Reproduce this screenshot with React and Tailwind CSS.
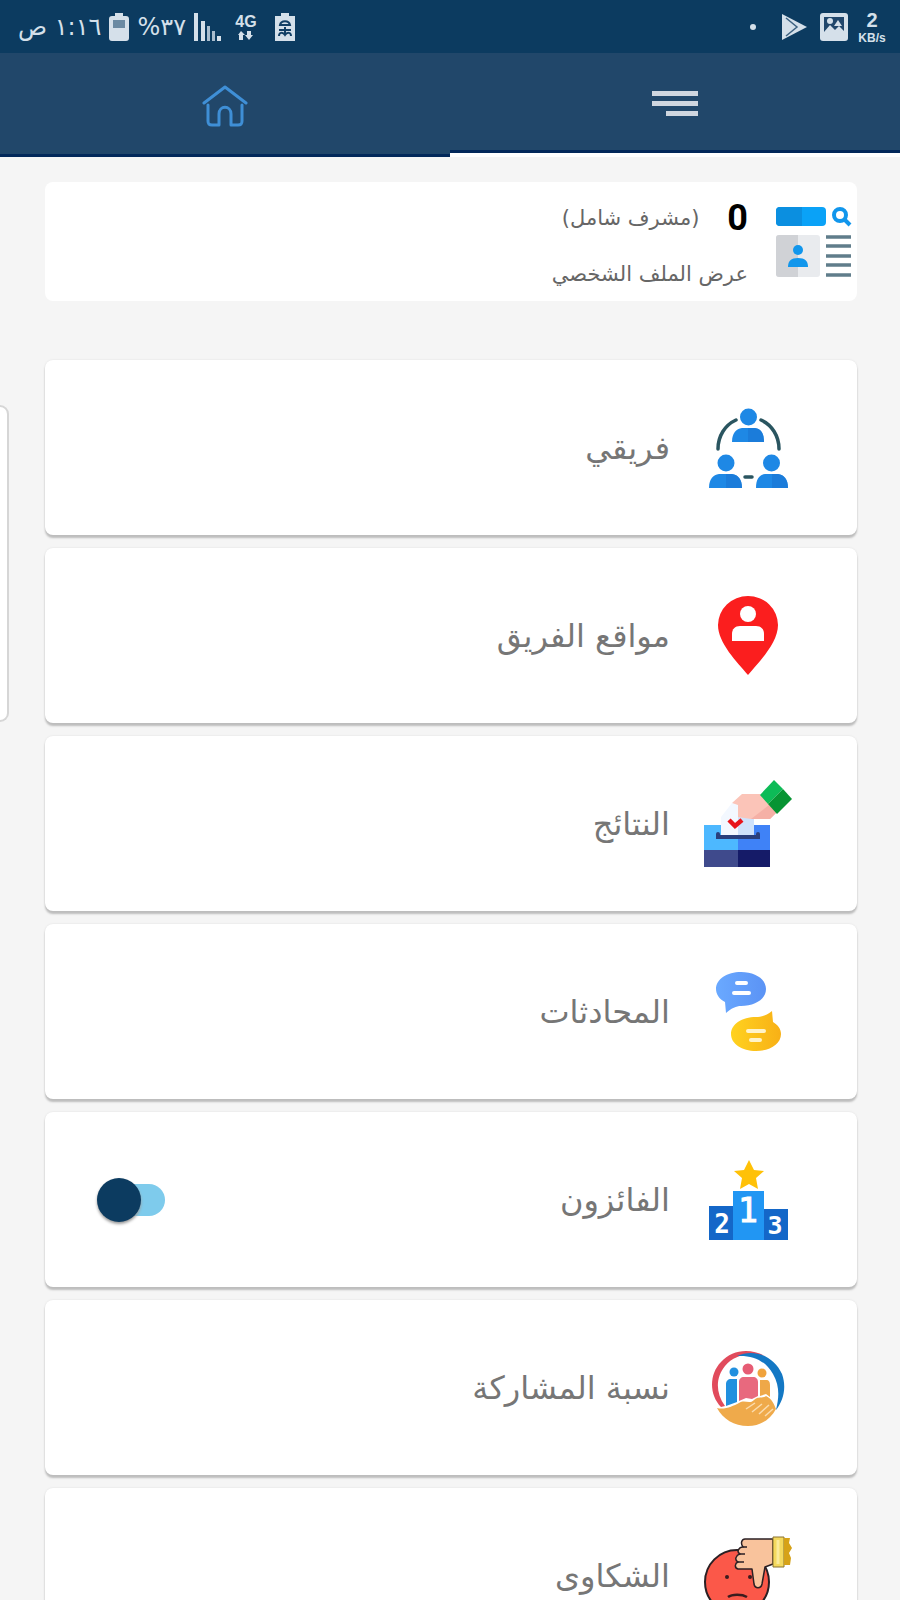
import React from "react";

function TeamIcon() {
  return (
    <svg viewBox="0 0 90 90" className="size-[90px] shrink-0" aria-hidden="true">
      <g fill="none" stroke="#2a5560" strokeWidth="3.5" strokeLinecap="round">
        <path d="M15 46C15 33 22 22 33 17M58 17C69 22 76 33 76 46M42 74H49" />
      </g>
      <g fill="#1e88e5">
        <circle cx="45.500" cy="14" r="8.500" />
        <path d="M29 39C29 30 33 26 39 25H52C58 26 61 30 61 39Z" />
        <circle cx="23" cy="60" r="8.500" />
        <path d="M6 85C6 76 10 72 16 71H29C35 72 39 76 39 85Z" />
        <circle cx="68.500" cy="60" r="8.500" />
        <path d="M53 85C53 76 56 72 62 71H75C81 72 85 76 85 85Z" />
      </g>
      <g fill="#1a78d6" opacity=".7">
        <path d="M45 25H52C58 26 61 30 61 39H45Z" />
        <path d="M23 71H29C35 72 39 76 39 85H23Z" />
        <path d="M69 71H75C81 72 85 76 85 85H69Z" />
      </g>
    </svg>
  );
}

function PinIcon() {
  return (
    <svg viewBox="0 0 90 90" className="size-[90px] shrink-0" aria-hidden="true">
      <path d="M45 84C34 71 15 52 15 34A30 29 0 0 1 75 34C75 52 56 71 45 84Z" fill="#fb1e1e" />
      <circle cx="45" cy="23" r="8" fill="#fff" />
      <path d="M29 50V43C29 38 32 35 37 35H53C58 35 61 38 61 43V50Z" fill="#fff" />
    </svg>
  );
}

function BallotIcon() {
  return (
    <svg viewBox="0 0 90 90" className="size-[90px] shrink-0" aria-hidden="true">
      <path d="M1 46H35V71H1Z" fill="#4db8ff" />
      <path d="M35 46H67V71H35Z" fill="#3f82f7" />
      <path d="M1 71H35V88H1Z" fill="#3f4a8c" />
      <path d="M35 71H67V88H35Z" fill="#151b68" />
      <path d="M18 57V38L29 24H35V57Z" fill="#f3f8ff" />
      <path d="M35 26L51 40V57H35Z" fill="#cfe2fb" />
      <path d="M15 55V58H55V55" fill="none" stroke="#2a3f7c" strokeWidth="4" strokeLinecap="round" />
      <path d="M29 24L39 15H57L74 33L67 40H48L35 38V26Z" fill="#fbc4b8" />
      <path d="M48 40L66 26L74 33L67 40Z" fill="#f5b0a6" />
      <path d="M71 1L80 10L65 25L57 16Z" fill="#0dbb57" />
      <path d="M80 10L89 20L74 35L65 25Z" fill="#079433" />
      <path d="M26 41L32 47L39 41" fill="none" stroke="#e8151c" strokeWidth="4.500" />
    </svg>
  );
}

function ChatIcon() {
  return (
    <svg viewBox="0 0 90 90" className="size-[90px] shrink-0" aria-hidden="true">
      <defs>
        <linearGradient id="blueBubble" x1="0" x2="1">
          <stop offset="0" stopColor="#6aa9ff" />
          <stop offset="1" stopColor="#5b93f5" />
        </linearGradient>
        <linearGradient id="goldBubble" x1="0" x2="1">
          <stop offset="0" stopColor="#ffd21f" />
          <stop offset="1" stopColor="#f8b016" />
        </linearGradient>
      </defs>
      <path d="M23 46L22 35C16 32 13 27 13 22C13 12 24 5 38 5S63 12 63 22S52 39 38 39C33 39 29 41 23 46Z" fill="url(#blueBubble)" />
      <path d="M69 44L70 55C75 58 78 62 78 67C78 77 67 84 53 84S28 77 28 67S39 50 53 50C58 50 63 49 69 44Z" fill="url(#goldBubble)" />
      <g stroke="#fff" strokeWidth="4" strokeLinecap="round">
        <path d="M34 16H43M31 26H46" />
        <path d="M45 64H61M48 73H57" stroke="#fff3c9" />
      </g>
    </svg>
  );
}

function PodiumIcon() {
  return (
    <svg viewBox="0 0 90 90" className="size-[90px] shrink-0" aria-hidden="true">
      <path d="M46 5L51 15L61 16L53 23L55 34L46 29L37 34L39 23L31 16L41 15Z" fill="#ffc107" />
      <path d="M6 51H30V85H6Z" fill="#1467c8" />
      <path d="M61 54H85V85H61Z" fill="#1467c8" />
      <path d="M30 36H61V85H30Z" fill="#2196f3" />
      <g fill="#fff" fontFamily="'DejaVu Sans Mono', monospace" fontWeight="700" textAnchor="middle">
        <text x="19" y="78" fontSize="26">2</text>
        <text x="45" y="67" fontSize="33" fontWeight="400" stroke="#fff">1</text>
        <text x="72" y="79" fontSize="25">3</text>
      </g>
    </svg>
  );
}

function CommunityIcon() {
  return (
    <svg viewBox="0 0 90 90" className="size-[90px] shrink-0" aria-hidden="true">
      <path d="M18 64C6 52 6 31 18 19C29 6 48 5 62 13C46 9 31 12 22 23C13 34 12 49 22 63Z" fill="#e14b5c" />
      <path d="M34 13C51 5 71 13 79 31C84 45 80 58 73 67C76 55 77 43 70 31C62 17 49 12 34 13Z" fill="#1478c4" />
      <path d="M14 65C22 67 30 63 36 60C42 56 46 62 51 57C55 53 59 56 63 53C69 56 71 61 73 66C67 77 57 83 45 83C31 83 20 76 14 65Z" fill="#efaa4b" />
      <path d="M43 66L52 60M49 69L59 61M56 71L66 62M62 73L70 66" stroke="#fbdcae" strokeWidth="1.500" />
      <circle cx="31" cy="29" r="4.500" fill="#2290df" />
      <path d="M23 63V41C23 38 25 36 28 36H34V59Z" fill="#2290df" />
      <circle cx="45" cy="26" r="5.500" fill="#e65c74" />
      <path d="M36 58V39C36 36 38 34 41 34H50C53 34 55 36 55 39V53L49 56L43 55Z" fill="#e8697e" />
      <circle cx="59" cy="30" r="4.500" fill="#f0a33c" />
      <path d="M57 53V37H63C66 37 67 39 67 42V54L63 51Z" fill="#efa848" />
    </svg>
  );
}

function ComplaintIcon() {
  return (
    <svg viewBox="0 0 90 90" className="size-[90px] shrink-0" aria-hidden="true">
      <circle cx="34" cy="51" r="32" fill="#fb5849" stroke="#2b2024" strokeWidth="2" />
      <circle cx="24" cy="46" r="2" fill="#3b1c1e" />
      <circle cx="47" cy="46" r="2" fill="#3b1c1e" />
      <path d="M25 66C29 63 39 63 44 66" fill="none" stroke="#3b1c1e" strokeWidth="2.500" />
      <path d="M42 8H70V33L62 36L59 53C58 58 52 58 51 53L49 38H35C31 37 32 32 35 31C31 29 33 24 37 23C33 21 36 16 40 16C37 12 39 8 42 8Z" fill="#f9c39c" stroke="#2b2024" strokeWidth="1.500" strokeLinejoin="round" />
      <path d="M35 31H41M37 23H42M40 16H44" stroke="#2b2024" strokeWidth="1.500" />
      <path d="M70 6H81V36H70Z" fill="#f4d95e" stroke="#8a7330" strokeWidth="1" />
      <path d="M81 7H87L86 12L89 17L86 22L88 27L87 34H81Z" fill="#d6a218" />
      <path d="M75 9V33" stroke="#fbeb9a" strokeWidth="3" />
    </svg>
  );
}

function ProfileIcon() {
  return (
    <svg viewBox="0 0 77 72" className="h-[72px] w-[77px] shrink-0" aria-hidden="true">
      <rect x="0" y="1" width="50" height="19" rx="4" fill="#0aa2f7" />
      <path d="M4 1H26V20H4A4 4 0 0 1 0 16V5A4 4 0 0 1 4 1Z" fill="#0b8fe0" />
      <circle cx="64" cy="9" r="6" fill="none" stroke="#1196ec" strokeWidth="4" />
      <path d="M68 13L74 19" stroke="#1196ec" strokeWidth="4" />
      <rect x="0" y="29" width="44" height="42" rx="3" fill="#e9ebee" />
      <path d="M3 29H22V71H3A3 3 0 0 1 0 68V32A3 3 0 0 1 3 29Z" fill="#d0d2d6" />
      <circle cx="22" cy="44" r="5" fill="#1196ec" />
      <path d="M12 61C12 55 15 52 22 52S32 55 32 61Z" fill="#1196ec" />
      <path d="M50 31H75M50 40H75M50 50H75M50 59H75M50 69H75" stroke="#607d8b" strokeWidth="3.500" />
    </svg>
  );
}

const items = [
  { label: "فريقي", Icon: TeamIcon },
  { label: "مواقع الفريق", Icon: PinIcon },
  { label: "النتائج", Icon: BallotIcon },
  { label: "المحادثات", Icon: ChatIcon },
  { label: "الفائزون", Icon: PodiumIcon, toggle: true },
  { label: "نسبة المشاركة", Icon: CommunityIcon },
  { label: "الشكاوى", Icon: ComplaintIcon },
];

function StatusBar() {
  return (
    <div className="flex h-[53px] shrink-0 items-center justify-between bg-[#0c3b60] pr-3 pl-[18px] text-[#d5e0ea]">
      <div className="flex items-center gap-2">
        <div className="flex w-8 flex-col items-center font-['Liberation_Sans',sans-serif] font-bold">
          <span className="text-[20px] leading-[22px]">2</span>
          <span dir="ltr" className="text-[12px] leading-[14px]">KB/s</span>
        </div>
        <svg viewBox="0 0 28 28" className="size-7" aria-hidden="true">
          <rect width="28" height="28" rx="3" fill="#d5e0ea" />
          <path d="M4 4H24V18L19 13L15 17L10 12L4 19Z" fill="#21476c" />
          <circle cx="10" cy="8" r="3" fill="#d5e0ea" />
          <path d="M14 13L18 7L22 13Z" fill="#d5e0ea" />
        </svg>
        <svg viewBox="0 0 28 28" className="mr-1 size-7" aria-hidden="true">
          <path d="M2 1L27 14L2 27Z" fill="#d5e0ea" />
          <path d="M6 5L17 14L6 23" fill="none" stroke="#3d6180" strokeWidth="1.500" />
        </svg>
        <span className="mr-4 size-[6px] rounded-full bg-[#d5e0ea]" />
      </div>
      <div className="flex items-center gap-2">
        <svg viewBox="0 0 22 30" className="ml-2 h-[30px] w-[22px]" aria-hidden="true">
          <path d="M7 1H15V4H21V29H1V4H7Z" fill="#d5e0ea" />
          <path d="M6 13C7 8 15 8 16 13ZM5 18H17M11 15V23M5 24C5 20 9 20 11 23C13 20 17 20 17 24" fill="none" stroke="#123f65" strokeWidth="2" />
        </svg>
        <div className="ml-1 flex w-6 flex-col items-center font-['Liberation_Sans',sans-serif] font-bold">
          <span dir="ltr" className="text-[16px] leading-[18px]">4G</span>
          <svg viewBox="0 0 16 10" className="h-[10px] w-4" aria-hidden="true">
            <path d="M3 0L7 4H5V9H1V4H0ZM11 9L7 4H9V0H13V4H15Z" fill="#d5e0ea" />
          </svg>
        </div>
        <svg viewBox="0 0 28 28" className="h-7 w-7" aria-hidden="true">
          <path d="M0 0H4V28H0ZM7 8H11V28H7Z" fill="#d5e0ea" />
          <path d="M13 13H16V28H13ZM18 18H21V28H18Z" fill="#a9bdce" />
          <path d="M23 23H27V28H23Z" fill="#d5e0ea" />
        </svg>
        <span className="text-[24px] leading-8">٣٧%</span>
        <svg viewBox="0 0 20 28" className="h-7 w-5" aria-hidden="true">
          <path d="M6 0H14V3H17A3 3 0 0 1 20 6V25A3 3 0 0 1 17 28H3A3 3 0 0 1 0 25V6A3 3 0 0 1 3 3H6Z" fill="#d5e0ea" />
          <path d="M4 7H16V15H4Z" fill="#6b8aa3" />
        </svg>
        <span className="text-[24px] leading-8">١:١٦ ص</span>
      </div>
    </div>
  );
}

function Tabs() {
  return (
    <nav className="grid h-[104px] shrink-0 grid-cols-2 bg-[#21476a]">
      <button type="button" aria-label="القائمة" className="flex flex-col border-b-4 border-white">
        <span className="flex w-full grow items-center justify-center border-b-3 border-[#02285a] pt-1">
          <svg viewBox="0 0 46 27" className="h-[27px] w-[46px]" aria-hidden="true">
            <path d="M0 1H46V6H0ZM0 11H46V16H0ZM14 21H46V26H14Z" fill="#cfd6df" />
          </svg>
        </span>
      </button>
      <button type="button" aria-label="الرئيسية" className="flex items-center justify-center border-b-3 border-[#02285a] pt-1">
        <svg viewBox="0 0 46 44" className="h-11 w-[46px]" fill="none" stroke="#3f8fd6" strokeWidth="3" strokeLinecap="round" strokeLinejoin="round" aria-hidden="true">
          <path d="M2 19L23 3L44 19M6 21V37C6 40 7 41 10 41H17V30C17 21 29 21 29 30V41H36C39 41 40 40 40 37V21" />
        </svg>
      </button>
    </nav>
  );
}

function MenuCard({ label, Icon, toggle }) {
  const content = (
    <>
      <Icon />
      <span className="text-[32px] leading-[44px] text-[#767676]">{label}</span>
    </>
  );
  const card = "flex h-[175px] w-full shrink-0 items-center gap-[33px] rounded-lg bg-white pr-16 pl-12 shadow-[0_3px_2px_#bdbdbd,0_0_2px_#dddddd]";
  if (!toggle) {
    return <a href="#" className={card}>{content}</a>;
  }
  return (
    <label className={card}>
      {content}
      <span className="relative mr-auto flex h-11 w-[72px] items-center">
        <input
          type="checkbox"
          role="switch"
          defaultChecked
          className="peer h-8 w-14 appearance-none rounded-full bg-[#7ecbec]"
        />
        <span className="pointer-events-none absolute left-1 size-11 rounded-full bg-[#0c3b60] shadow-[0_2px_3px_#9a9a9a]" />
      </span>
    </label>
  );
}

export default function App() {
  return (
    <div dir="rtl" className="relative flex h-dvh flex-col overflow-hidden bg-[#f5f5f5] font-['DejaVu_Sans',sans-serif]">
      <StatusBar />
      <Tabs />
      <aside className="absolute top-[405px] left-0 h-[317px] w-[9px] rounded-r-xl border-2 border-l-0 border-[#d6d6d6] bg-white" />
      <main className="flex grow flex-col gap-[13px] overflow-y-auto pt-[25px] pr-[43px] pl-[45px] [scrollbar-width:none]">
        <a href="#" className="mb-[46px] flex h-[119px] shrink-0 items-center gap-7 rounded-lg bg-white pr-1 pl-4">
          <ProfileIcon />
          <span className="flex flex-col gap-5 pt-1">
            <span className="flex items-center gap-7">
              <strong className="font-['Roboto',sans-serif] text-[36px] leading-10 font-bold text-black">0</strong>
              <span className="text-[21px] leading-8 text-[#666666]">(مشرف شامل)</span>
            </span>
            <span className="text-[21px] leading-8 text-[#666666]">عرض الملف الشخصي</span>
          </span>
        </a>
        {items.map((item) => (
          <MenuCard key={item.label} {...item} />
        ))}
      </main>
    </div>
  );
}
